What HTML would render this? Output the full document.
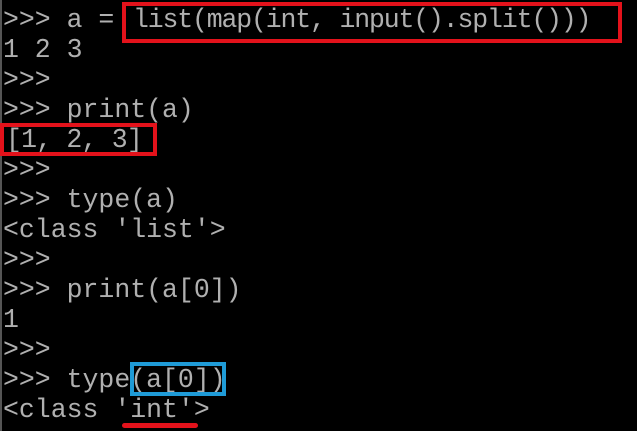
<!DOCTYPE html>
<html><head><style>
html,body{margin:0;padding:0;background:#000;width:637px;height:431px;overflow:hidden;position:relative}
.l{position:absolute;left:3px;font-family:"Liberation Mono",monospace;font-size:26.5px;color:#b0b0b0;white-space:pre;line-height:30px;height:30px}
.b{position:absolute;box-sizing:border-box}
</style></head><body>
<div style="position:absolute;left:0;top:0;width:2px;height:431px;background:#555"></div>
<div class="l" style="top:5px">&gt;&gt;&gt; a =</div>
<div class="l" style="top:5px;left:133px;letter-spacing:-1.15px">list(map(int, input().split()))</div>
<div class="l" style="top:35px">1 2 3</div>
<div class="l" style="top:65px">&gt;&gt;&gt;</div>
<div class="l" style="top:95px">&gt;&gt;&gt; print(a)</div>
<div class="l" style="top:125px;left:6px;letter-spacing:-0.8px">[1, 2, 3]</div>
<div class="l" style="top:155px">&gt;&gt;&gt;</div>
<div class="l" style="top:185px">&gt;&gt;&gt; type(a)</div>
<div class="l" style="top:215px">&lt;class 'list'&gt;</div>
<div class="l" style="top:245px">&gt;&gt;&gt;</div>
<div class="l" style="top:275px">&gt;&gt;&gt; print(a[0])</div>
<div class="l" style="top:305px">1</div>
<div class="l" style="top:335px">&gt;&gt;&gt;</div>
<div class="l" style="top:365px">&gt;&gt;&gt; type(a[0])</div>
<div class="l" style="top:395px">&lt;class 'int'&gt;</div>
<div class="b" style="left:122px;top:2px;width:500px;height:41px;border:4px solid #e3121b"></div>
<div class="b" style="left:0;top:123px;width:157px;height:33px;border:4px solid #e3121b"></div>
<div class="b" style="left:130px;top:362px;width:96px;height:34px;border:4px solid #1f9bd7"></div>
<div class="b" style="left:122px;top:423px;width:76px;height:5px;background:#e3121b;border-radius:3px"></div>
</body></html>
